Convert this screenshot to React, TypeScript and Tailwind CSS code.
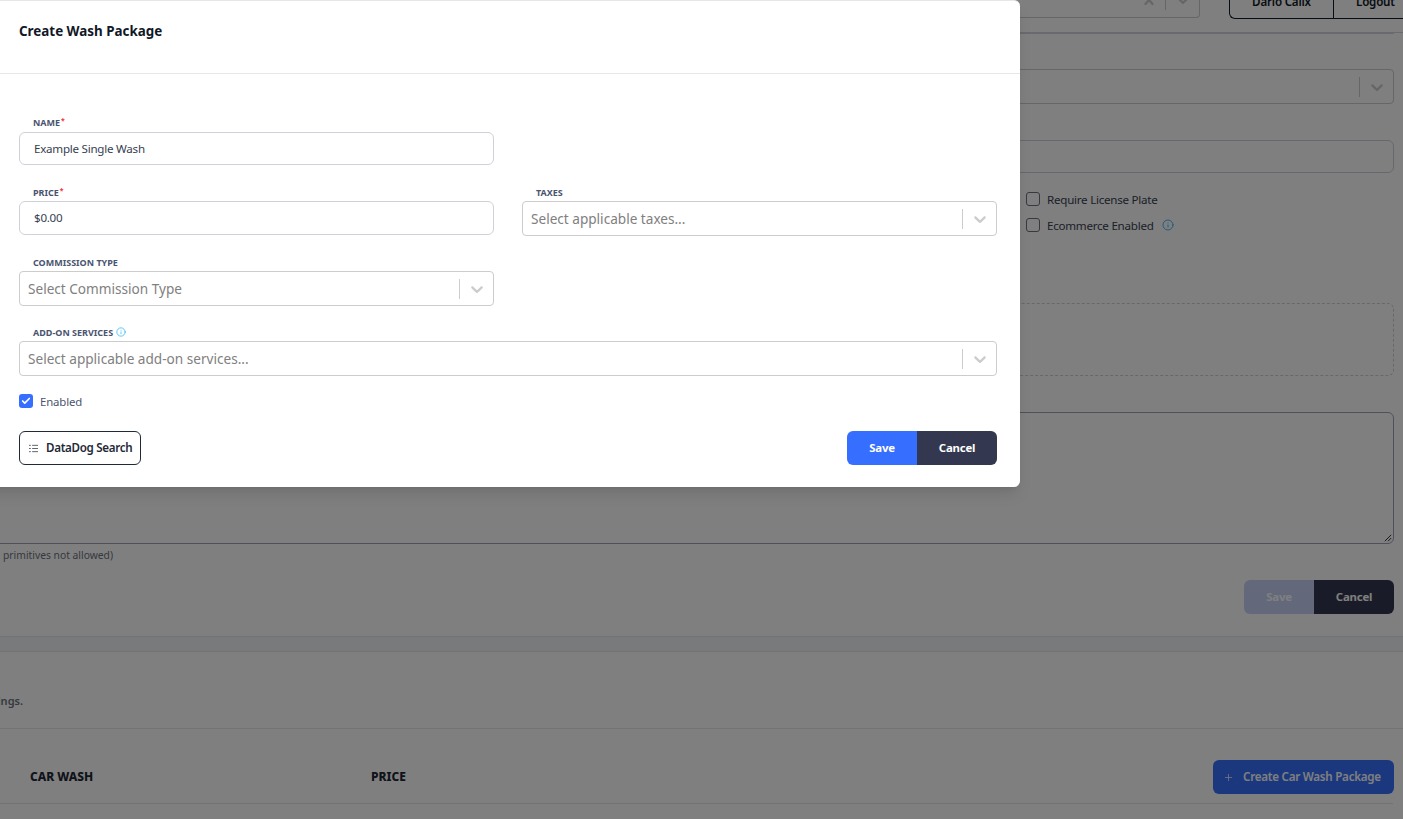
import React from 'react';
import { Check, Info, Plus } from 'lucide-react';

const FONT = "font-['Noto_Sans',sans-serif]";

const Chevron: React.FC = () => (
  <svg viewBox="0 0 20 20" className="w-5 h-5 fill-[#cccccc]">
    <path d="M4.516 7.548c0.436-0.446 1.043-0.481 1.576 0l3.908 3.747 3.908-3.747c0.533-0.481 1.141-0.446 1.574 0 0.436 0.445 0.408 1.197 0 1.615-0.406 0.418-4.695 4.502-4.695 4.502-0.217 0.223-0.502 0.335-0.787 0.335s-0.57-0.112-0.789-0.335c0 0-4.287-4.084-4.695-4.502s-0.436-1.17 0-1.615z" />
  </svg>
);

const ClearX: React.FC = () => (
  <svg viewBox="0 0 20 20" className="w-5 h-5 fill-[#cccccc]">
    <path d="M14.348 14.849c-0.469 0.469-1.229 0.469-1.697 0l-2.651-3.030-2.651 3.029c-0.469 0.469-1.229 0.469-1.697 0-0.469-0.469-0.469-1.229 0-1.697l2.758-3.15-2.759-3.152c-0.469-0.469-0.469-1.228 0-1.697s1.228-0.469 1.697 0l2.652 3.031 2.651-3.031c0.469-0.469 1.228-0.469 1.697 0s0.469 1.229 0 1.697l-2.758 3.152 2.758 3.15c0.469 0.469 0.469 1.229 0 1.698z" />
  </svg>
);

const SelectBox: React.FC<{ placeholder?: string }> = ({ placeholder }) => (
  <div className="h-[35px] flex items-center border border-[#cccccc] rounded-[4px] bg-white">
    <span className="flex-1 pl-2 pt-px text-[13.6px] text-[#808080] truncate">{placeholder}</span>
    <span className="w-px h-5 bg-[#cccccc]" />
    <span className="w-[33px] flex justify-center">
      <Chevron />
    </span>
  </div>
);

const Label: React.FC<{ text: string; required?: boolean; info?: boolean; first?: boolean }> = ({ text, required, info, first }) => (
  <div className={`${first ? 'h-[14px] mb-[3px]' : 'h-[15px] pt-px mb-[2px]'} pl-[14px] flex items-center text-[9px] font-bold uppercase text-[#4a5470] leading-none`}>
    {text}
    {required && <span className="text-red-500 ml-[1px] -mt-[4px] text-[7px]">*</span>}
    {info && <Info size={10} className="ml-[3px] text-sky-500" strokeWidth={1.5} />}
  </div>
);

const TextBox: React.FC<{ value: string; height: string }> = ({ value, height }) => (
  <div className={`${height} flex items-center pl-[14px] border border-[#cfd1da] rounded-[6px] bg-white text-[11.6px] tracking-[-0.25px] text-[#374151]`}>
    {value}
  </div>
);

const Background: React.FC = () => (
  <div className="h-[819px] flex flex-col bg-white text-[#374151]">
    <div className="h-[33px] border-b border-[#d1d5db] flex justify-end shrink-0">
      <div className="h-[19px] flex">
        <div className="w-[300px] h-[19px] border border-[#cccccc] border-t-0 rounded-b-[4px] flex items-center justify-end -mt-px">
          <span className="w-5 flex justify-center -mt-[16px]"><ClearX /></span>
          <span className="w-px h-5 ml-[6px] bg-[#cccccc] -mt-[16px]" />
          <span className="w-[33px] flex justify-center -mt-[16px]"><Chevron /></span>
        </div>
        <div className="ml-[29px] h-[19px] flex border border-t-0 border-r-0 border-[#111827] rounded-bl-[6px] overflow-hidden text-[11.6px] tracking-[-0.2px] font-semibold text-[#111827] leading-none">
          <div className="w-[103px] flex items-end justify-center pb-[10px]">Dario Calix</div>
          <div className="w-[70px] flex items-end pl-[22px] pb-[10px] border-l border-[#111827]">Logout</div>
        </div>
      </div>
    </div>

    {/* this block's left edge is scrolled out of the window */}
    <div className="-ml-[20px] pr-[9px] flex flex-col items-end shrink-0">
      <div className="w-full h-px bg-[#d1d5db] rounded-b-[6px]" />
      <div className="w-full h-[35px] mt-[35px] border border-[#cccccc] rounded-[4px] flex items-center justify-end">
        <span className="w-px h-5 bg-[#cccccc]" />
        <span className="w-[33px] flex justify-center"><Chevron /></span>
      </div>
      <div className="w-full h-[33px] border border-[#cfd1da] rounded-[6px] mt-[36px]" />
      <div className="w-full mt-[19px] flex flex-col gap-[12px] pl-[1046px] text-[11.6px] tracking-[-0.25px] text-[#374151]">
        <div className="flex items-center gap-[7px] h-[14px]">
          <span className="w-[14px] h-[14px] border border-[#6b7280] rounded-[3px]" />
          <span className="pt-px">Require License Plate</span>
        </div>
        <div className="flex items-center gap-[7px] h-[14px]">
          <span className="w-[14px] h-[14px] border border-[#6b7280] rounded-[3px]" />
          <span className="pt-px">Ecommerce Enabled</span>
          <Info size={12} className="ml-[1px] text-sky-500" strokeWidth={1.5} />
        </div>
      </div>
      <div className="w-full h-[73px] mt-[71px] border border-dashed border-[#cfd1da] rounded-[6px]" />
      <div className="w-full h-[132px] mt-[36px] border border-[#9ca3af] rounded-[6px] relative">
        <svg viewBox="0 0 10 10" className="absolute right-px bottom-px w-[8px] h-[8px] stroke-black" fill="none">
          <path d="M1 9 9 1M5 9 9 5" />
        </svg>
      </div>
      <div className="w-full h-[24px] pl-[20px] flex items-center">
        <div className="w-[113px] flex justify-end overflow-hidden whitespace-nowrap text-[10.3px] text-[#6b7280]">
          (objects and primitives not allowed)
        </div>
      </div>
      <div className="mt-[12px] h-[34px] flex rounded-[6px] overflow-hidden text-[11.4px] tracking-[-0.2px] font-bold">
        <div className="w-[70px] flex items-center justify-center bg-[#c6d2f5] text-white">Save</div>
        <div className="w-[80px] flex items-center justify-center bg-[#333850] text-white">Cancel</div>
      </div>
    </div>

    <div className="h-[16px] mt-[22px] bg-[#f3f4f6] border-y border-[#e5e7eb] shrink-0" />
    <div className="h-[77px] border-b border-[#e5e7eb] shrink-0 flex items-end pb-[19px]">
      <div className="w-[23px] flex justify-end overflow-hidden whitespace-nowrap text-[11px] font-semibold text-[#6b7280]">
        settings.
      </div>
    </div>
    <div className="h-[75px] shrink-0 pt-[21px] flex items-center border-b border-[#e5e7eb] mr-[10px] pl-[30px] text-[12px] font-extrabold text-[#1f2937]">
      <span className="w-[341px]">CAR WASH</span>
      <span>PRICE</span>
      <div className="ml-auto -mr-[1px] mt-[1px] w-[181px] h-[34px] flex items-center pl-[10px] gap-[9px] rounded-[6px] bg-[#3771ff] text-white text-[11.6px] tracking-[-0.25px] font-semibold">
        <Plus size={11} strokeWidth={1.5} />
        Create Car Wash Package
      </div>
    </div>
  </div>
);

const App: React.FC = () => {
  return (
    <div className={`relative w-[1403px] h-[819px] overflow-hidden ${FONT}`}>
      <Background />
      <div className="absolute inset-0 bg-black/50" />

      {/* modal runs off the left edge of the page */}
      <div className="absolute top-0 left-[-20px] w-[1040px] h-[487px] bg-white rounded-[6px] border-t border-[#e5e7eb] shadow-lg">
        <div className="h-[73px] pl-[39px] pt-[20px] border-b border-[#e5e7eb] text-[13.4px] leading-[20px] font-bold text-[#111827]">
          Create Wash Package
        </div>
        <div className="pl-[39px] pr-[23px] pt-[41px]">
          <div className="grid grid-cols-2 gap-x-[28px]">
            <div>
              <Label text="Name" required first />
              <TextBox value="Example Single Wash" height="h-[33px]" />
            </div>
            <div />
            <div className="mt-[19px]">
              <Label text="Price" required />
              <TextBox value="$0.00" height="h-[34px]" />
            </div>
            <div className="mt-[19px]">
              <Label text="Taxes" />
              <SelectBox placeholder="Select applicable taxes..." />
            </div>
            <div className="mt-[18px]">
              <Label text="Commission Type" />
              <SelectBox placeholder="Select Commission Type" />
            </div>
            <div />
            <div className="mt-[18px] col-span-2">
              <Label text="Add-on Services" info />
              <SelectBox placeholder="Select applicable add-on services..." />
            </div>
          </div>
          <div className="mt-[18px] h-[14px] flex items-center gap-[7px] text-[11.4px] tracking-[-0.15px] text-[#4a5470]">
            <span className="w-[14px] h-[14px] rounded-[3px] bg-[#366eff] flex items-center justify-center">
              <Check size={10} strokeWidth={4} className="text-white" />
            </span>
            <span className="pt-px">Enabled</span>
          </div>
          <div className="mt-[23px] flex justify-between">
            <div className="w-[122px] h-[34px] flex items-center pl-[8px] gap-[7px] border border-[#1f2937] rounded-[6px] text-[11.6px] tracking-[-0.3px] font-semibold text-[#1f2937]">
              <svg viewBox="0 0 12 10" className="w-[11px] h-[9px] stroke-[#4b5563]" fill="none" strokeWidth="1">
                <path d="M1 1.5h2M4.500 1.500H11M1 5h2M4.500 5H11M1 8.500h2M4.500 8.500H11" />
              </svg>
              DataDog Search
            </div>
            <div className="h-[34px] flex rounded-[6px] overflow-hidden text-[11.4px] tracking-[-0.2px] font-bold text-white">
              <div className="w-[70px] pb-px flex items-center justify-center bg-[#366eff]">Save</div>
              <div className="w-[80px] pb-px flex items-center justify-center bg-[#333850]">Cancel</div>
            </div>
          </div>
        </div>
      </div>
    </div>
  );
};

export default App;
